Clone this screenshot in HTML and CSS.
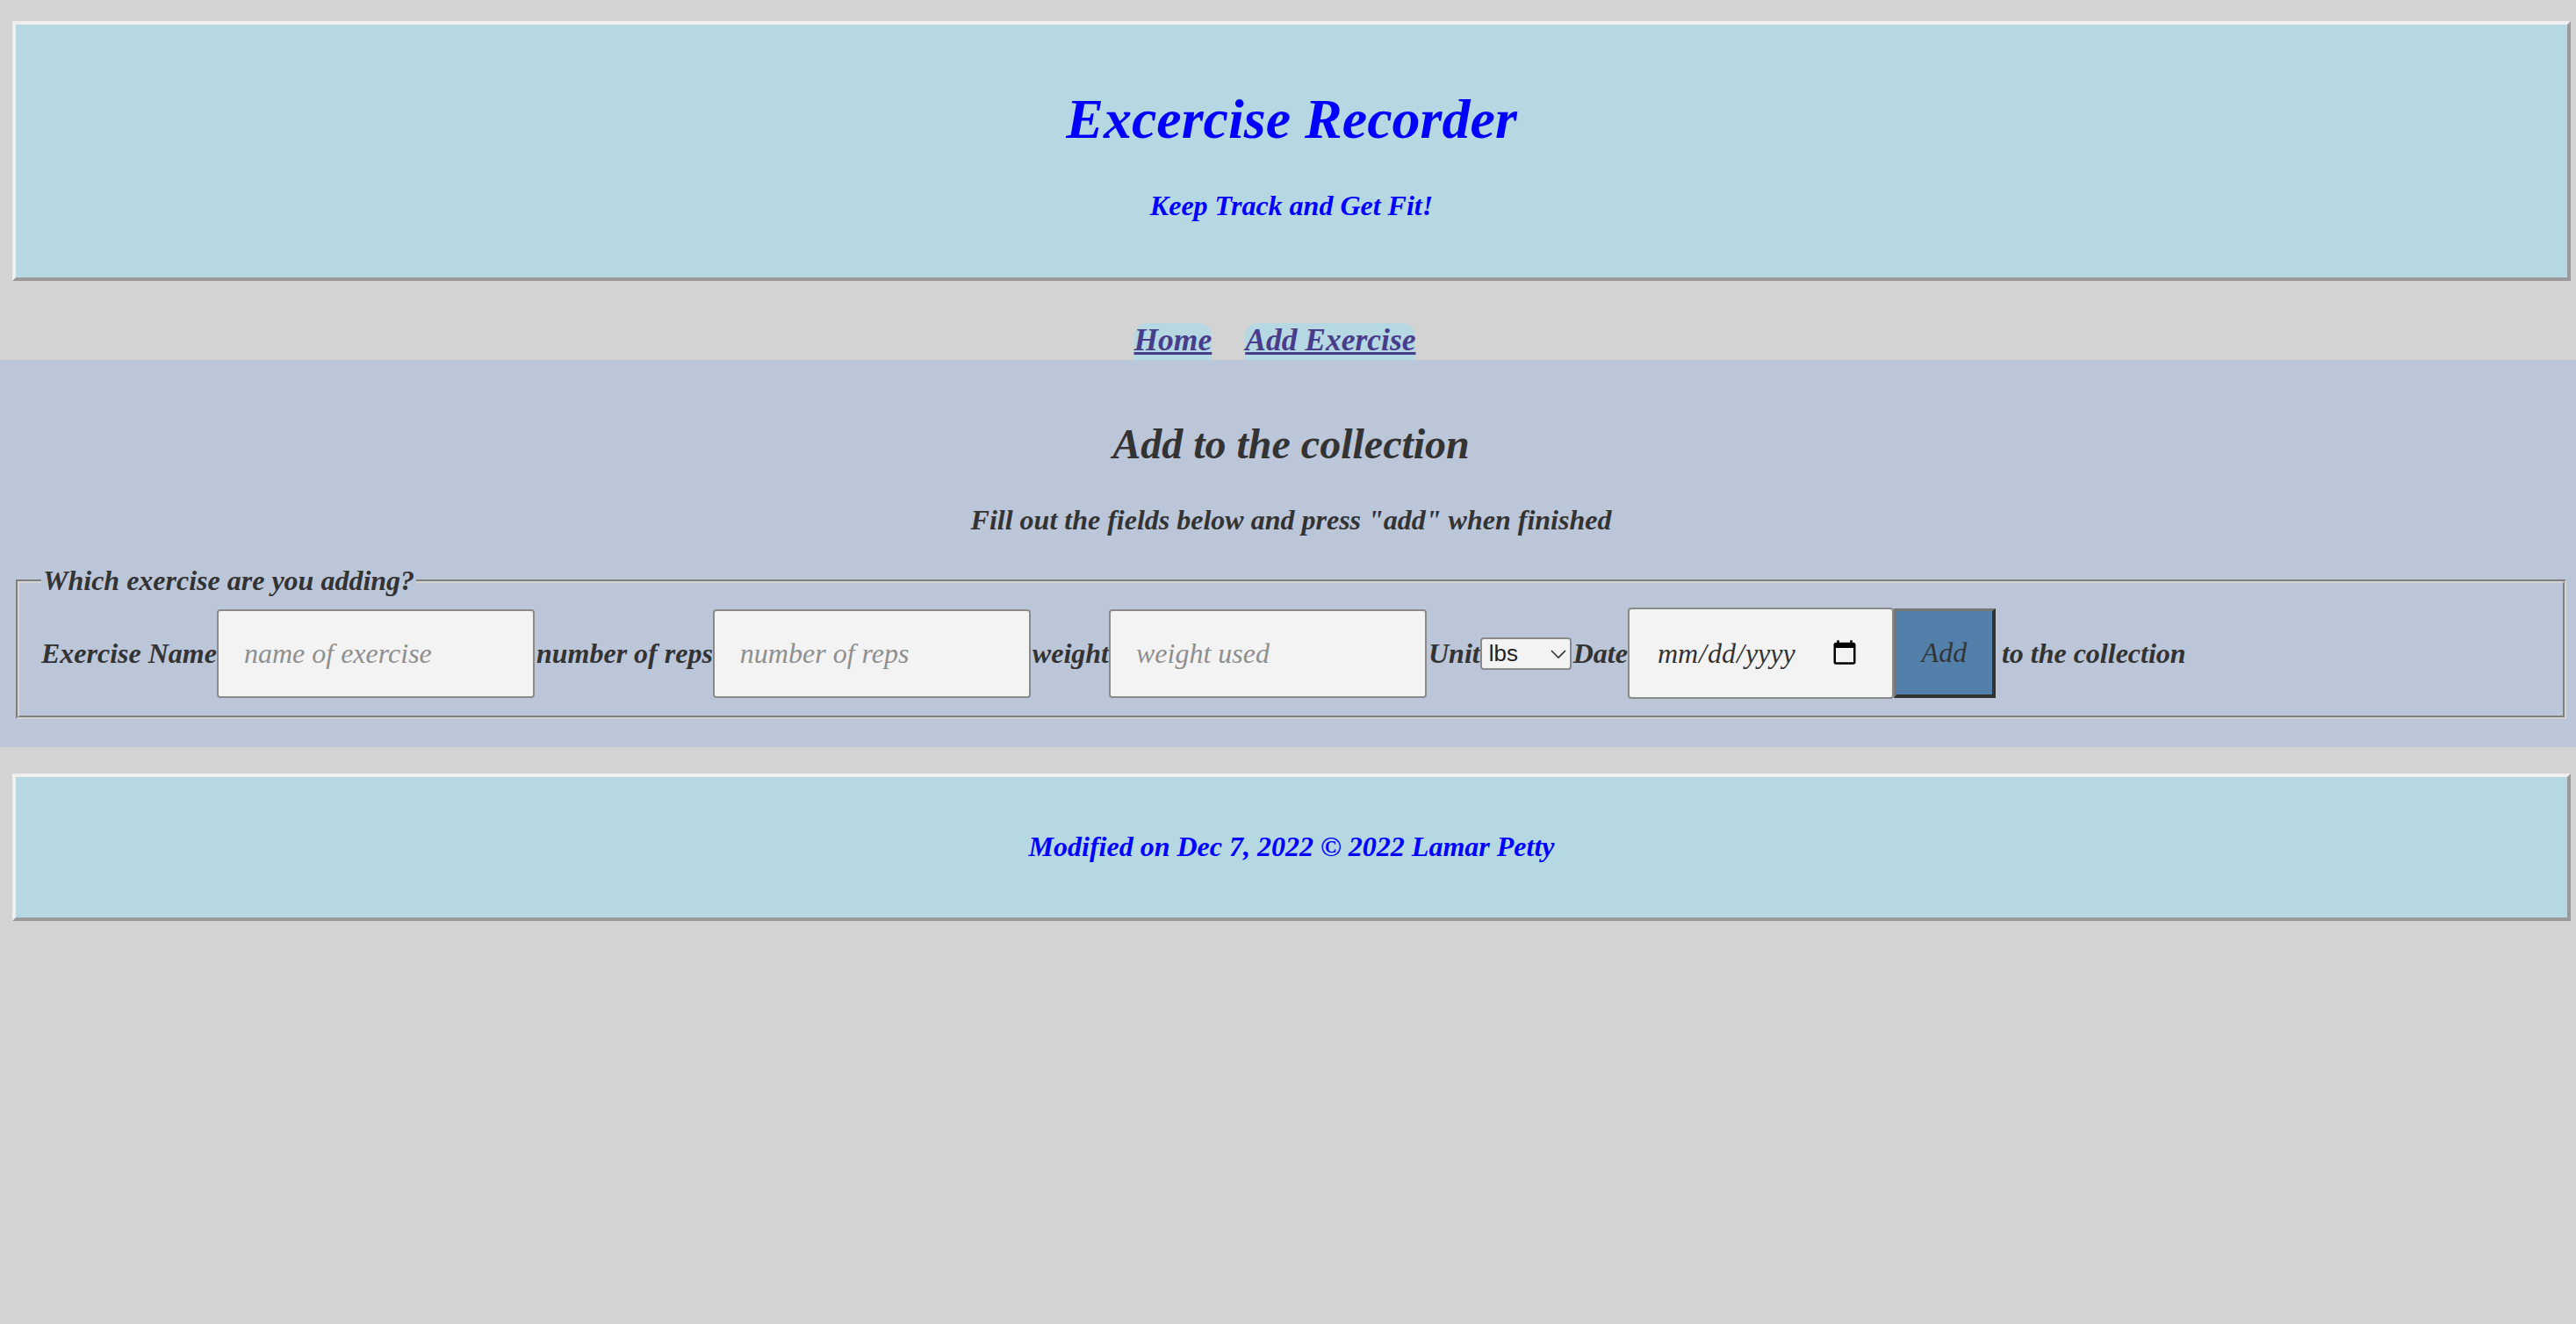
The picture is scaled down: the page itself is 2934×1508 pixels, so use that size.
FILE: index.html
```html
<!DOCTYPE html>
<html lang="en">
<head>
<meta charset="utf-8">
<title>Excercise Recorder</title>
<link rel="stylesheet" href="styles.css">
</head>
<body>
<header class="site-header">
  <h1 class="site-title">Excercise Recorder</h1>
  <p class="site-tagline">Keep Track and Get Fit!</p>
</header>
<nav class="site-nav">
  <a class="nav-link" href="#">Home</a>
  <a class="nav-link" href="#">Add Exercise</a>
</nav>
<main class="content">
  <h2 class="section-title">Add to the collection</h2>
  <p class="instructions">Fill out the fields below and press "add" when finished</p>
  <form class="add-form">
    <fieldset class="field-group">
      <legend class="field-legend">Which exercise are you adding?</legend>
      <div class="field-row">
        <label class="field-label first-label" for="ex-name">Exercise Name</label>
        <input id="ex-name" class="text-input" type="text" placeholder="name of exercise">
        <label class="field-label" for="ex-reps">number of reps</label>
        <input id="ex-reps" class="text-input" type="number" placeholder="number of reps">
        <label class="field-label" for="ex-weight">weight</label>
        <input id="ex-weight" class="text-input" type="number" placeholder="weight used">
        <label class="field-label" for="ex-unit">Unit</label>
        <span class="select-wrap">
          <select id="ex-unit" class="unit-select">
            <option>lbs</option>
            <option>kgs</option>
          </select>
          <svg class="select-arrow" width="18" height="10" viewBox="0 0 18 10" aria-hidden="true"><path d="M1 1 L9 9 L17 1" fill="none" stroke="#333" stroke-width="1.6"/></svg>
        </span>
        <label class="field-label" for="ex-date">Date</label>
        <input id="ex-date" class="date-input" type="date">
        <button class="add-button" type="button">Add</button>
        <span class="field-label trailing-label">to the collection</span>
      </div>
    </fieldset>
  </form>
</main>
<footer class="site-footer">
  <p class="footer-text">Modified on Dec 7, 2022 &copy; 2022 Lamar Petty</p>
</footer>
</body>
</html>
```

FILE: styles.css
```css
html, body {
  margin: 0;
  padding: 0;
}

body {
  background: #d3d3d3;
  font-family: "Liberation Serif", "Times New Roman", serif;
  font-style: italic;
  font-weight: bold;
  color: #333333;
}

.site-header {
  margin: 24px 6px 0 14px;
  padding: 71px 0 63px;
  background: #b5d8e2;
  border-style: solid;
  border-width: 4px;
  border-color: #efefef #9a9a9a #9a9a9a #efefef;
  text-align: center;
  color: #0000ff;
}

.site-title {
  margin: 0;
  font-size: 64px;
  line-height: 74px;
  font-weight: bold;
}

.site-tagline {
  margin: 43px 0 0;
  font-size: 32px;
  line-height: 37px;
}

.site-nav {
  display: flex;
  justify-content: center;
  margin: 0 6px 0 14px;
  padding-top: 48px;
}

.nav-link {
  margin-right: 38px;
  padding-bottom: 4px;
  font-size: 35.5px;
  line-height: 38px;
  color: #483d8b;
  text-decoration: underline;
  background: #b5d8e2;
  border-radius: 15px 15px 0 0;
}

.content {
  background: #bbc6d8;
  padding: 68px 11px 32px 18px;
  text-align: center;
}

.section-title {
  margin: 0;
  font-size: 48px;
  line-height: 55px;
}

.instructions {
  margin: 41px 0 32px;
  font-size: 32px;
  line-height: 37px;
}

.add-form {
  margin: 0;
  text-align: left;
}

.field-group {
  margin: 0;
  padding: 12px 25px 19px;
  border: 4px groove #d4d4d4;
}

.field-legend {
  padding: 0 2px;
  font-size: 32px;
  line-height: 37px;
}

.field-row {
  display: flex;
  align-items: center;
  height: 104px;
}

.field-label {
  margin-left: 2px;
  font-size: 32px;
  line-height: 37px;
  white-space: nowrap;
}

.first-label {
  margin-left: 0;
}

.trailing-label {
  margin-left: 7px;
}

.text-input,
.date-input {
  box-sizing: border-box;
  margin: 0;
  padding: 0 20px 0 29px;
  background: #f3f3f3;
  border: 2px solid #8a8a8a;
  border-radius: 4px;
  font-family: "Liberation Serif", "Times New Roman", serif;
  font-style: italic;
  font-weight: normal;
  font-size: 32px;
  color: #333333;
}

.text-input {
  width: 362px;
  height: 101px;
  -moz-appearance: textfield;
}

.text-input::-webkit-outer-spin-button,
.text-input::-webkit-inner-spin-button {
  -webkit-appearance: none;
  margin: 0;
}

.text-input::placeholder {
  color: #8f8f8f;
}

.date-input {
  width: 303px;
  height: 104px;
  padding-left: 31px;
  padding-right: 36px;
}

.select-wrap {
  position: relative;
  display: inline-flex;
}

.unit-select {
  box-sizing: border-box;
  margin: 0;
  width: 104px;
  height: 37px;
  padding: 0 4px 0 8px;
  background: #f3f3f3;
  border: 2px solid #8a8a8a;
  border-radius: 4px;
  -webkit-appearance: none;
  appearance: none;
  font-family: "Liberation Sans", Arial, sans-serif;
  font-style: normal;
  font-weight: normal;
  font-size: 26px;
  color: #222222;
}

.select-arrow {
  position: absolute;
  right: 6px;
  top: 14px;
  pointer-events: none;
}

.add-button {
  box-sizing: border-box;
  margin: 0;
  width: 116px;
  height: 102px;
  padding: 0;
  background: #5280ab;
  border-style: solid;
  border-width: 3px 4px 4px 3px;
  border-color: #777777 #333333 #333333 #777777;
  font-family: "Liberation Serif", "Times New Roman", serif;
  font-style: italic;
  font-weight: normal;
  font-size: 32px;
  color: #333333;
}

.site-footer {
  margin: 30px 6px 0 14px;
  padding: 61px 0 62px;
  background: #b5d8e2;
  border-style: solid;
  border-width: 4px;
  border-color: #efefef #9a9a9a #9a9a9a #efefef;
  text-align: center;
  color: #0000ff;
}

.footer-text {
  margin: 0;
  font-size: 32px;
  line-height: 37px;
}
```
